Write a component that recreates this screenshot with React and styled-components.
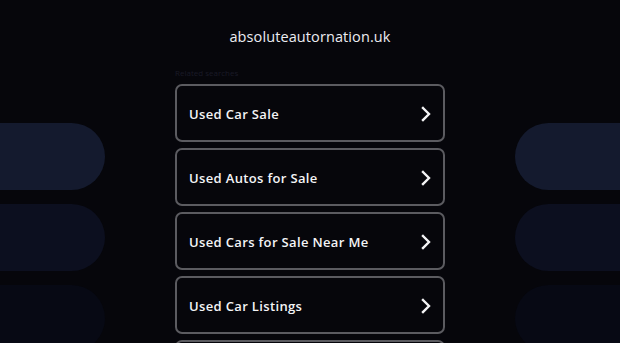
import React from 'react';
import styled, { createGlobalStyle } from 'styled-components';

const Global = createGlobalStyle`
  html, body {
    margin: 0;
    padding: 0;
    background: #06060b;
    overflow: hidden;
  }
`;

const Page = styled.div`
  position: relative;
  width: 620px;
  height: 343px;
  overflow: hidden;
  background: #06060b;
  font-family: "Open Sans", "Liberation Sans", sans-serif;
`;

const SideStack = styled.div`
  position: absolute;
  top: 123px;
  ${(p) => (p.$side === 'left' ? 'right: 515px;' : 'left: 515px;')}
  display: flex;
  flex-direction: column;
  gap: 14px;
`;

const Pill = styled.div`
  width: 200px;
  height: 67px;
  border-radius: 34px;
  background: ${(p) => p.$bg};
`;

const Main = styled.div`
  position: relative;
  display: flex;
  flex-direction: column;
  align-items: center;
  padding-top: 27px;
`;

const Domain = styled.h1`
  margin: 0;
  font-weight: 500;
  font-size: 14.5px;
  line-height: 20px;
  color: #ececf2;
  letter-spacing: 0.1px;
`;

const List = styled.div`
  width: 270px;
  margin-top: 18px;
  display: flex;
  flex-direction: column;
  gap: 6px;
`;

const Caption = styled.div`
  font-size: 8px;
  line-height: 10px;
  color: #1a1a27;
  margin: 3px 0 0;
`;

const Card = styled.a`
  box-sizing: border-box;
  height: 58px;
  display: flex;
  align-items: center;
  justify-content: space-between;
  padding: 1px 12px 0 12px;
  border: 2px solid #5b5b60;
  border-radius: 7px;
  color: #f4f4f6;
  text-decoration: none;
  font-size: 13px;
  font-weight: 600;
  letter-spacing: 0.35px;
`;

const Chevron = () => (
  <svg width="12" height="16" viewBox="0 0 12 16" fill="none">
    <path d="M4 2 L10 8 L4 14" stroke="#f4f4f6" strokeWidth="2.4" strokeLinecap="square" />
  </svg>
);

const items = [
  'Used Car Sale',
  'Used Autos for Sale',
  'Used Cars for Sale Near Me',
  'Used Car Listings',
  'Used Car Dealers',
];

const pills = ['#141a2e', '#0c0f1f', '#070914'];

export default function App() {
  return (
    <Page>
      <Global />
      <SideStack $side="left">
        {pills.map((c) => <Pill key={c} $bg={c} />)}
      </SideStack>
      <SideStack $side="right">
        {pills.map((c) => <Pill key={c} $bg={c} />)}
      </SideStack>
      <Main>
        <Domain>absoluteautornation.uk</Domain>
        <List>
          <Caption>Related searches</Caption>
          {items.map((t) => (
            <Card key={t} href="#">
              <span>{t}</span>
              <Chevron />
            </Card>
          ))}
        </List>
      </Main>
    </Page>
  );
}
